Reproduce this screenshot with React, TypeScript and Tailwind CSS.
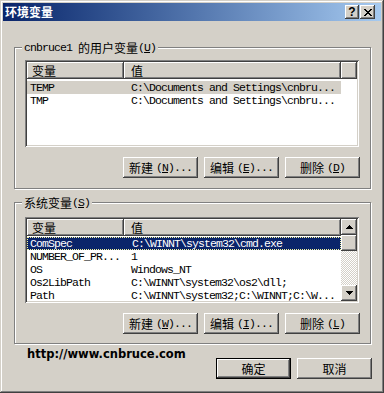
import React from "react";

const RAISED =
  "shadow-[inset_-1px_-1px_0_#404040,inset_1px_1px_0_#ffffff,inset_-2px_-2px_0_#808080,inset_2px_2px_0_#d4d0c8]";
const SUNKEN =
  "shadow-[inset_1px_1px_0_#808080,inset_-1px_-1px_0_#ffffff,inset_2px_2px_0_#404040,inset_-2px_-2px_0_#d4d0c8]";
const MONO = "font-['Liberation_Mono',monospace] text-[11.5px] tracking-[-0.9px]";
const CJK = "font-['Noto_Sans_CJK_SC',sans-serif] text-[12px]";

type BtnProps = { cjk: string; mn?: string; rest?: string; def?: boolean };

function Btn({ cjk, mn, rest = "", def }: BtnProps) {
  return (
    <div
      className={`w-[75px] h-[21px] bg-[#d4d0c8] flex items-center justify-center text-black ${
        def ? "border border-black shadow-[inset_-1px_-1px_0_#404040,inset_1px_1px_0_#ffffff,inset_-2px_-2px_0_#808080]" : RAISED
      }`}
    >
      <span className={`${CJK} leading-none`}>{cjk}</span>
      {mn && (
        <span className={`${MONO} leading-none ml-[3px]`}>
          (<u>{mn}</u>){rest}
        </span>
      )}
    </div>
  );
}

function Arrow({ up }: { up?: boolean }) {
  return (
    <svg width="7" height="4" viewBox="0 0 7 4" shapeRendering="crispEdges">
      {up ? (
        <path d="M3 0h1v1h1v1h1v1h1v1H0V3h1V2h1V1h1z" fill="#000" />
      ) : (
        <path d="M0 0h7v1H6v1H5v1H4v1H3V3H2V2H1V1H0z" fill="#000" />
      )}
    </svg>
  );
}

function CloseGlyph() {
  return (
    <svg width="8" height="7" viewBox="0 0 8 7" shapeRendering="crispEdges">
      <path
        d="M0 0h2v1H0zM6 0h2v1H6zM1 1h2v1H1zM5 1h2v1H5zM2 2h4v1H2zM3 3h2v1H3zM2 4h4v1H2zM1 5h2v1H1zM5 5h2v1H5zM0 6h2v1H0zM6 6h2v1H6z"
        fill="#000"
      />
    </svg>
  );
}

type Row = { name: string; value: string };

function Header({ filler }: { filler?: boolean }) {
  return (
    <div className="flex h-[17px] shrink-0">
      <div className={`w-[97px] h-full ${RAISED} bg-[#d4d0c8] flex items-center pl-[5px] ${CJK} leading-none`}>变量</div>
      <div className={`w-[217px] h-full ${RAISED} bg-[#d4d0c8] flex items-center pl-[7px] ${CJK} leading-none`}>值</div>
      {filler && <div className={`flex-1 h-full ${RAISED} bg-[#d4d0c8]`} />}
    </div>
  );
}

function ListRow({ row, sel }: { row: Row; sel?: "gray" | "blue" }) {
  const bg =
    sel === "gray"
      ? "bg-[#d4d0c8] text-black"
      : sel === "blue"
      ? "bg-[#0a246a] text-white border border-dotted border-[#f5f5a0]"
      : "text-black";
  return (
    <div className={`flex h-[13px] w-[314px] items-center ${bg} ${MONO} leading-none whitespace-nowrap`}>
      <div className={`w-[97px] ${sel === "blue" ? "pl-[2px]" : "pl-[3px]"}`}>{row.name}</div>
      <div className="pl-[7px]">{row.value}</div>
    </div>
  );
}

function Group({
  label,
  className,
  children,
}: {
  label: React.ReactNode;
  className: string;
  children: React.ReactNode;
}) {
  return (
    <div
      className={`relative border border-[#808080] shadow-[inset_1px_1px_0_#ffffff,1px_1px_0_#ffffff] ${className}`}
    >
      <div className="absolute left-[7px] top-[-8px] bg-[#d4d0c8] px-[2px] h-[15px] flex items-center whitespace-nowrap">
        {label}
      </div>
      {children}
    </div>
  );
}

export default function App() {
  const userRows: Row[] = [
    { name: "TEMP", value: "C:\\Documents and Settings\\cnbru..." },
    { name: "TMP", value: "C:\\Documents and Settings\\cnbru..." },
  ];
  const sysRows: Row[] = [
    { name: "ComSpec", value: "C:\\WINNT\\system32\\cmd.exe" },
    { name: "NUMBER_OF_PR...", value: "1" },
    { name: "OS", value: "Windows_NT" },
    { name: "Os2LibPath", value: "C:\\WINNT\\system32\\os2\\dll;" },
    { name: "Path", value: "C:\\WINNT\\system32;C:\\WINNT;C:\\W..." },
  ];

  return (
    <div
      className={`w-[384px] h-[393px] bg-[#d4d0c8] flex flex-col text-black shadow-[inset_-1px_-1px_0_#404040,inset_1px_1px_0_#d4d0c8,inset_-2px_-2px_0_#808080,inset_2px_2px_0_#ffffff]`}
    >
      {/* Title bar */}
      <div className="mx-[3px] mt-[3px] h-[18px] flex items-center bg-gradient-to-r from-[#0a246a] to-[#a6caf0] pl-[2px] pr-[6px]">
        <span className={`${CJK} font-bold text-white leading-none`}>环境变量</span>
        <div className="flex-1" />
        <div className={`w-[14px] h-[14px] ${RAISED} bg-[#d4d0c8] flex items-center justify-center`}>
          <span className="font-['Liberation_Sans',sans-serif] font-bold text-[12px] leading-none">?</span>
        </div>
        <div className={`ml-[1px] w-[15px] h-[14px] ${RAISED} bg-[#d4d0c8] flex items-center justify-center`}>
          <CloseGlyph />
        </div>
      </div>

      {/* Body */}
      <div className="pl-[14px] pr-[13px] pt-[26px] flex flex-col">
        <Group
          className="h-[142px] pt-[12px] pl-[10px] pr-[10px]"
          label={
            <>
              <span className={`${MONO} leading-none`}>cnbruce1&nbsp;</span>
              <span className={`${CJK} leading-none`}>的用户变量</span>
              <span className={`${MONO} leading-none`}>
                (<u>U</u>)
              </span>
            </>
          }
        >
          <div className={`w-[334px] h-[87px] bg-white ${SUNKEN} p-[2px] flex flex-col`}>
            <Header filler />
            <div className="pt-[2px] flex flex-col">
              <ListRow row={userRows[0]} sel="gray" />
              <ListRow row={userRows[1]} />
            </div>
          </div>
          <div className="mt-[10px] flex justify-end gap-[6px]">
            <Btn cjk="新建" mn="N" rest="..." />
            <Btn cjk="编辑" mn="E" rest="..." />
            <Btn cjk="删除" mn="D" />
          </div>
        </Group>

        <Group
          className="mt-[13px] h-[142px] pt-[14px] pl-[10px] pr-[10px]"
          label={
            <>
              <span className={`${CJK} leading-none`}>系统变量</span>
              <span className={`${MONO} leading-none`}>
                (<u>S</u>)
              </span>
            </>
          }
        >
          <div className={`w-[334px] h-[86px] bg-white ${SUNKEN} p-[2px] flex`}>
            <div className="flex flex-col w-[314px]">
              <Header />
              <div className="pt-[1px] flex flex-col">
                {sysRows.map((r, i) => (
                  <ListRow key={r.name} row={r} sel={i === 0 ? "blue" : undefined} />
                ))}
              </div>
            </div>
            <div className="w-[16px] flex flex-col">
              <div className={`h-[16px] ${RAISED} bg-[#d4d0c8] flex items-center justify-center`}>
                <Arrow up />
              </div>
              <div className={`h-[16px] ${RAISED} bg-[#d4d0c8]`} />
              <div className="flex-1 bg-[conic-gradient(#d4d0c8_25%,#ffffff_0_50%,#d4d0c8_0_75%,#ffffff_0)] bg-[length:2px_2px]" />
              <div className={`h-[16px] ${RAISED} bg-[#d4d0c8] flex items-center justify-center`}>
                <Arrow />
              </div>
            </div>
          </div>
          <div className="mt-[10px] flex justify-end gap-[6px]">
            <Btn cjk="新建" mn="W" rest="..." />
            <Btn cjk="编辑" mn="I" rest="..." />
            <Btn cjk="删除" mn="L" />
          </div>
        </Group>
      </div>

      {/* Bottom */}
      <div className="flex pl-[27px] pr-[12px]">
        <div className="pt-[3px] font-['DejaVu_Sans',sans-serif] font-bold text-[11.5px] leading-[14px]">
          http://www.cnbruce.com
        </div>
        <div className="flex-1" />
        <div className="pt-[14px] flex gap-[6px]">
          <Btn cjk="确定" def />
          <Btn cjk="取消" />
        </div>
      </div>
    </div>
  );
}
